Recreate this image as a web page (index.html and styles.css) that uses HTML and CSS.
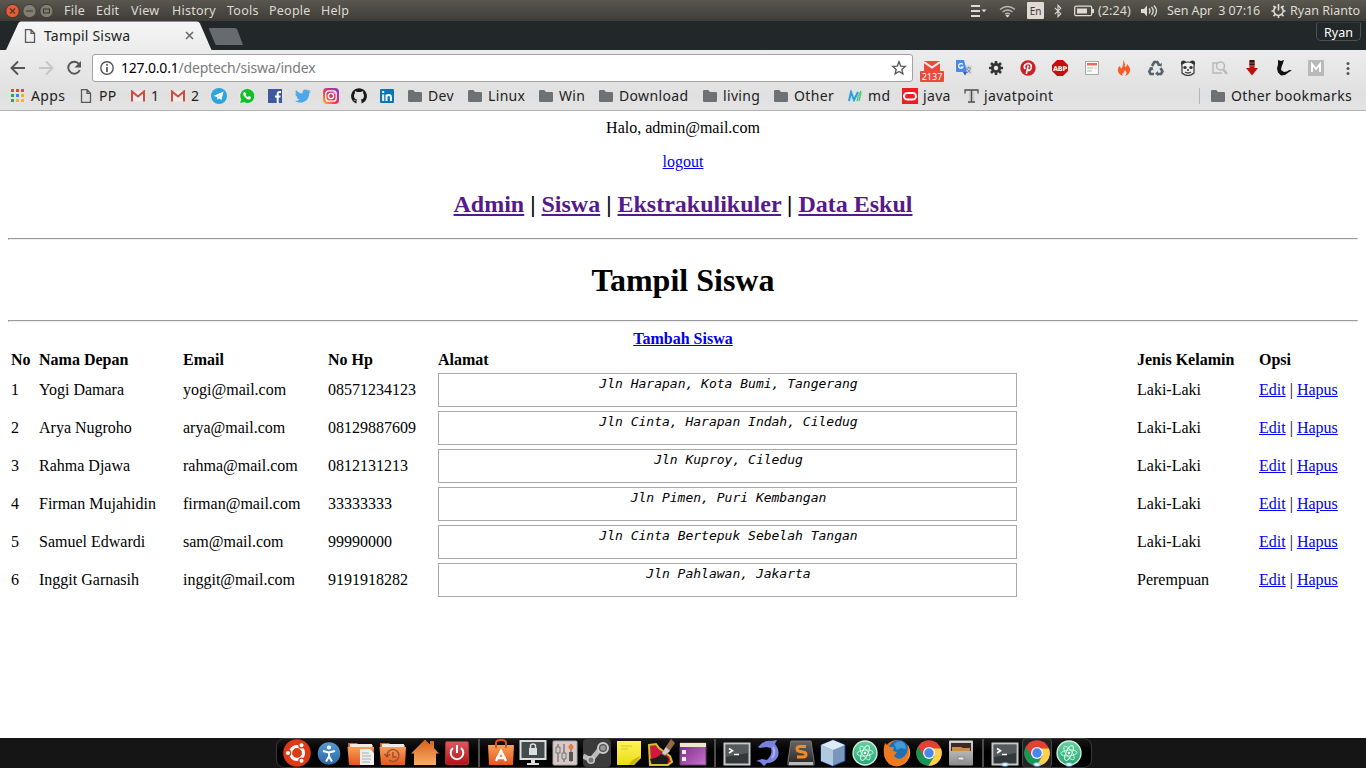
FILE: index.html
```html
<!DOCTYPE html>
<html lang="id">
<head>
<meta charset="utf-8">
<title>Tampil Siswa</title>
<link rel="stylesheet" href="styles.css">
</head>
<body>
<svg class="defs" width="0" height="0">
  <defs>
    <linearGradient id="orange" x1="0" y1="0" x2="0" y2="1"><stop offset="0" stop-color="#f6a05a"/><stop offset="1" stop-color="#e4571e"/></linearGradient>
    <linearGradient id="home" x1="0" y1="0" x2="0" y2="1"><stop offset="0" stop-color="#d4601c"/><stop offset="1" stop-color="#f9ad68"/></linearGradient>
    <linearGradient id="blue" x1="0" y1="0" x2="0" y2="1"><stop offset="0" stop-color="#5b9bd0"/><stop offset="1" stop-color="#2a68a8"/></linearGradient>
    <linearGradient id="red" x1="0" y1="0" x2="0" y2="1"><stop offset="0" stop-color="#dc5a60"/><stop offset="1" stop-color="#b80f18"/></linearGradient>
    <linearGradient id="purple" x1="0" y1="0" x2="1" y2="1"><stop offset="0" stop-color="#7d2482"/><stop offset="1" stop-color="#c873cf"/></linearGradient>
    <linearGradient id="gray" x1="0" y1="0" x2="0" y2="1"><stop offset="0" stop-color="#d6d6d6"/><stop offset="1" stop-color="#8b8b8b"/></linearGradient>
    <linearGradient id="dark" x1="0" y1="0" x2="0" y2="1"><stop offset="0" stop-color="#666"/><stop offset="1" stop-color="#262626"/></linearGradient>
    <linearGradient id="green" x1="0" y1="0" x2="0" y2="1"><stop offset="0" stop-color="#67d2a0"/><stop offset="1" stop-color="#23a873"/></linearGradient>
    <linearGradient id="yellow" x1="0" y1="0" x2="0" y2="1"><stop offset="0" stop-color="#fff35a"/><stop offset="1" stop-color="#ecdc14"/></linearGradient>
    <linearGradient id="insta" x1="0" y1="1" x2="1" y2="0"><stop offset="0" stop-color="#fdc13a"/><stop offset=".45" stop-color="#ee3254"/><stop offset="1" stop-color="#8139ca"/></linearGradient>
    <radialGradient id="glow"><stop offset="0" stop-color="#fff"/><stop offset=".5" stop-color="#b8ddf8"/><stop offset="1" stop-color="#5aa0e0" stop-opacity="0"/></radialGradient>
    <symbol id="folder" viewBox="0 0 14 12"><path d="M0 1.2Q0 0 1.2 0H5.3L7 2h5.8Q14 2 14 3.2v7.6Q14 12 12.8 12H1.2Q0 12 0 10.8z" fill="#6d7174"/></symbol>
    <symbol id="page" viewBox="0 0 12 14"><path d="M1.5.7H7L10.5 4.3V13.3H1.5zM7 .7V4.3h3.5" fill="none" stroke="#5a5a5a" stroke-width="1.3"/></symbol>
    <symbol id="gmail" viewBox="0 0 14 12"><path d="M0 1h14v10.500H0z" fill="#ededed"/><path d="M1 11.500V1.500L7 6.500l6-5v10" fill="none" stroke="#d54b3d" stroke-width="2"/></symbol>
    <symbol id="chrome" viewBox="0 0 28 28"><circle cx="14" cy="14" r="12.700" fill="#e34133"/><path d="M3 7.700A12.700 12.700 0 0 0 13.500 26.700L19.500 16.900 14 14 8.500 17z" fill="#14985a"/><path d="M26 9.500H14l5.500 7.500-6 9.700A12.700 12.700 0 0 0 26 9.500" fill="#fed24a"/><circle cx="14" cy="14" r="6" fill="#f4f4f4"/><circle cx="14" cy="14" r="4.700" fill="#4787ee"/></symbol>
    <symbol id="terminal" viewBox="0 0 28 28"><path d="M1.500 4.500h25v21h-25z" fill="#33383a" stroke="#c8c8c8" stroke-width="2"/><path d="M3 6h22v8L3 18z" fill="#555a5c"/><path d="M6 9.500l3.500 2.300L6 14M11 15.500h5" fill="none" stroke="#fff" stroke-width="1.600"/></symbol>
    <symbol id="atom" viewBox="0 0 28 28"><circle cx="14" cy="14" r="12" fill="url(#green)" stroke="#d9eee4" stroke-width="1.300"/><g fill="none" stroke="#d2f7e6" stroke-width=".9"><ellipse cx="14" cy="14" rx="3" ry="8" transform="rotate(-35 14 14)"/><ellipse cx="14" cy="14" rx="3" ry="8" transform="rotate(25 14 14)"/><ellipse cx="14" cy="14" rx="3" ry="8" transform="rotate(85 14 14)"/></g><circle cx="14" cy="14" r="1.300" fill="#fff"/></symbol>
    <symbol id="gear" viewBox="0 0 16 16"><path d="M8 1v14M1 8h14M3 3l10 10M13 3L3 13" stroke="#333" stroke-width="2.600"/><circle cx="8" cy="8" r="5" fill="#333"/><circle cx="8" cy="8" r="2.200" fill="#e8e8e8"/></symbol>
  </defs>
</svg>

<header class="panel">
  <div class="window-buttons">
    <svg width="50" height="16" viewBox="0 0 50 16"><circle cx="7.500" cy="8" r="6.700" fill="#e75c32" stroke="#44352c"/><circle cx="24.500" cy="8" r="6.700" fill="#817e74" stroke="#393833"/><circle cx="41.500" cy="8" r="6.700" fill="#817e74" stroke="#393833"/><path d="M5 5.500l5 5m0-5l-5 5M21 8h7M38.500 6h6v4h-6z" stroke="#3d3730" stroke-width="1.100" fill="none"/></svg>
  </div>
  <nav class="menu"><span class="m-file">File</span><span class="m-edit">Edit</span><span class="m-view">View</span><span class="m-history">History</span><span class="m-tools">Tools</span><span class="m-people">People</span><span>Help</span></nav>
  <div class="tray">
    <svg class="t-list" width="16" height="14" viewBox="0 0 16 14"><path d="M0 2h9M0 7h9M0 12h9" stroke="#dfdbd2" stroke-width="2.200"/><path d="M10.500 5.500h5L13 8.200z" fill="#dfdbd2"/></svg>
    <svg class="t-wifi" width="17" height="14" viewBox="0 0 17 14"><g fill="none" stroke="#bcb8ae" stroke-width="1.400"><path d="M1 5.500q7.500-6 15 0M3.500 8q5-4 10 0M6 10.300q2.500-2 5 0"/></g><path d="M6.500 11.500L8.500 13.500l2-2q-2-1.400-4 0" fill="#dfdbd2"/></svg>
    <span class="lang">En</span>
    <svg class="t-bt" width="8" height="14" viewBox="0 0 8 14"><path d="M.8 3.800L6.800 9.700 4 12.700V1.300l2.800 3-6 5.900" fill="none" stroke="#dfdbd2" stroke-width="1.100"/></svg>
    <svg class="t-battery" width="21" height="12" viewBox="0 0 21 12"><rect x=".7" y="1.200" width="17" height="9.500" rx="1.500" fill="none" stroke="#dfdbd2" stroke-width="1.300"/><path d="M3 3.500h10v5H3zM18 4h2v4h-2z" fill="#dfdbd2"/></svg>
    <span class="t-left">(2:24)</span>
    <svg class="t-volume" width="17" height="14" viewBox="0 0 17 14"><path d="M0 5h3l3-3.500v11L3 9H0z" fill="#dfdbd2"/><path d="M8 4.500q2 2.500 0 5M10.500 3q3.500 4 0 8M13 1.500q5 5.500 0 11" fill="none" stroke="#dfdbd2" stroke-width="1.300"/></svg>
    <span class="t-date">Sen Apr &nbsp;3 07:16</span>
    <svg class="t-gear" width="15" height="15" viewBox="0 0 16 16"><path d="M5.500 4A5 5 0 1 0 10.500 4M8 1v7" fill="none" stroke="#dfdbd2" stroke-width="1.700"/><path d="M.5 8.500h2.500M13 8.500h2.500M2.500 3l1.700 1.700M13.500 3l-1.700 1.700M2.700 14l2-2M13.300 14l-2-2M8 13v3" stroke="#dfdbd2" stroke-width="1.700"/></svg>
    <span class="t-user">Ryan Rianto</span>
  </div>
</header>

<div class="tabs">
  <svg class="tab-shape" width="250" height="29" viewBox="0 0 250 29"><defs><linearGradient id="tabfill" x1="0" y1="0" x2="0" y2="1"><stop stop-color="#f5f5f5"/><stop offset="1" stop-color="#ececec"/></linearGradient></defs><path d="M6 29L18.500 2Q19.300.5 21 .5H197Q199 .5 200 2.500L211.500 29z" fill="url(#tabfill)"/><path d="M209.500 7H235q1.500 0 2.200 1.500L243 24H217q-1.300 0-2-1.500L209 8z" fill="#676b6f"/></svg>
  <div class="tab-label"><svg width="12" height="14"><use href="#page"/></svg><span>Tampil Siswa</span><svg class="close" width="9" height="9" viewBox="0 0 9 9"><path d="M1 1l7 7M8 1L1 8" stroke="#666" stroke-width="1.500"/></svg></div>
  <div class="profile">Ryan</div>
</div>

<div class="chrome">
  <div class="toolbar">
    <svg class="nav-icons" width="92" height="36" viewBox="0 0 92 36"><g fill="none" stroke-width="1.900"><path d="M25 18H12M18 11.500L11.500 18l6.500 6.500" stroke="#555"/><path d="M39 18h13M46 11.500l6.500 6.500-6.500 6.500" stroke="#c6c6c6"/><path d="M79 14A6 6 0 1 0 79.800 20" stroke="#555"/></g><path d="M81 11v6.500h-6.500z" fill="#555"/></svg>
    <div class="url">
      <svg width="14" height="14" viewBox="0 0 14 14"><circle cx="7" cy="7" r="6.200" fill="none" stroke="#555" stroke-width="1.400"/><path d="M7 3v1.800M7 6v5" stroke="#555" stroke-width="1.700"/></svg>
      <span class="address"><b>127.0.0.1</b>/deptech/siswa/index</span>
      <svg width="16" height="16" viewBox="0 0 16 16"><path d="M8 1.800l1.700 4.300 4.600.3-3.500 3 1.100 4.500L8 11.400l-3.900 2.500 1.100-4.500-3.500-3 4.600-.3z" fill="none" stroke="#555" stroke-width="1.300"/></svg>
    </div>
    <div class="extensions">
      <div class="mailbadge"><svg width="16" height="10" viewBox="0 0 16 10"><path d="M0 0h16v10H0z" fill="#e84b3c"/><path d="M0 1l8 5.500L16 1" fill="none" stroke="#eee" stroke-width="2"/></svg><span>2137</span></div>
      <svg width="16" height="16" viewBox="0 0 16 16"><path d="M6 5h10v10H8z" fill="#dcdcdc"/><path d="M0 0h8l3 12H1q-1 0-1-1z" fill="#4789ee"/><path d="M7 12h4l-2 3.500z" fill="#3059bd"/><path d="M6.800 4.500A2.300 2.300 0 1 0 7 7H4.800" stroke="#fff" stroke-width="1.200" fill="none"/><path d="M10 8h5M12.500 6.800V8M11 9l3.500 4M14.500 9L11 13" stroke="#75808c" stroke-width=".9"/></svg>
      <svg width="16" height="16"><use href="#gear"/></svg>
      <svg width="16" height="16" viewBox="0 0 16 16"><circle cx="8" cy="8" r="7.700" fill="#cb2027"/><path d="M5.300 9q-2-2-.2-4.200Q8.500 2 11 5q1 3-1 5-1.500 1-2.300-.5M8.200 5.500L6.300 14" fill="none" stroke="#fff" stroke-width="1.600"/></svg>
      <svg width="16" height="16" viewBox="0 0 16 16"><path d="M5 0h6l5 5v6l-5 5H5l-5-5V5z" fill="#c70d0e"/><text x="8" y="10.700" class="abp">ABP</text></svg>
      <svg width="16" height="16" viewBox="0 0 16 16"><path d="M1.500 1.500h13v13h-13z" fill="#fafafa" stroke="#a5a9ad"/><path d="M3 3h10v2.500H3z" fill="#ee6a5b"/><path d="M3 8h6M3 11h5" stroke="#a6c98c"/><path d="M10 8h3" stroke="#ccc"/></svg>
      <svg width="16" height="16" viewBox="0 0 16 16"><path d="M7 0q3 4 1.500 7Q11 7 11 4q4 4 3 7-1 4-5 5 3-3 0-6-1 3-3 4l1 2Q1 14 2 9q0-2 2-3l1 3Q8 6 7 0" fill="#fa5b25"/></svg>
      <svg width="16" height="16" viewBox="0 0 16 16"><g fill="none" stroke="#56616b" stroke-width="2.600"><path d="M4 6l2.300-4h3l2 3.500"/><path d="M12.500 8l2 3.500L13 14H9"/><path d="M6 14H2.500L1.300 11.500 3.300 8"/></g><path d="M9 5.500l4.500 1L14 3zM10 11v5l-3-2.500zM1 7.500L4.500 7l1 3.500z" fill="#56616b"/></svg>
      <svg width="16" height="16" viewBox="0 0 16 16"><circle cx="3.500" cy="3" r="2.600" fill="#333"/><circle cx="12.500" cy="3" r="2.600" fill="#333"/><path d="M2 4q6-4 12 0v9q-6 5-12 0z" fill="#f0f0f0" stroke="#333" stroke-width="1.200"/><ellipse cx="5" cy="7.500" rx="1.700" ry="1.500" fill="#333"/><ellipse cx="11" cy="7.500" rx="1.700" ry="1.500" fill="#333"/><path d="M5 12q3 2 6 0M7 10h2" stroke="#333" fill="none" stroke-width="1.400"/></svg>
      <svg width="16" height="16" viewBox="0 0 16 16"><g fill="none" stroke="#b9b9b9" stroke-width="1.500"><path d="M5 3H1v10h9M1 3h5"/><circle cx="8.500" cy="6" r="4"/></g><path d="M11 9l4 5" stroke="#b9b9b9" stroke-width="2.500"/></svg>
      <svg width="16" height="16" viewBox="0 0 16 16"><path d="M5.500 1h5v7H14l-6 7.500L2 8h3.500z" fill="#c60b0b"/><path d="M5.500 0h5v5h-5z" fill="#311"/><path d="M5 3h6M5 6h6" stroke="#a66"/></svg>
      <svg width="16" height="16" viewBox="0 0 16 16"><path d="M2 0l3 1 3-1-1 3-1.500 4-.5 3 3 2 3-.5L13 10l3 .5-3 1.500-4 3-4 .5-3-3-1-4 1-4z" fill="#111"/></svg>
      <svg width="16" height="16" viewBox="0 0 16 16"><rect width="16" height="16" rx="1" fill="#b9b9b9"/><path d="M4 12V4l4 5 4-5v8" fill="none" stroke="#fff" stroke-width="1.800"/></svg>
      <svg width="16" height="16" viewBox="0 0 16 16"><g fill="#555"><circle cx="8" cy="3.500" r="1.500"/><circle cx="8" cy="8.500" r="1.500"/><circle cx="8" cy="13.500" r="1.500"/></g></svg>
    </div>
  </div>
  <div class="bookmarks">
    <span class="b-apps"><svg width="14" height="14" viewBox="0 0 14 14"><path d="M0 0h3v3H0zM5 0h3v3H5zM10 0h3v3h-3z" fill="#ef4437"/><path d="M0 5h3v3H0zM0 10h3v3H0z" fill="#35a35a"/><path d="M5 5h3v3H5z" fill="#3b88e9"/><path d="M10 5h3v3h-3zM5 10h3v3H5zM10 10h3v3h-3z" fill="#fab315"/></svg>Apps</span>
    <span class="b-pp"><svg width="12" height="14"><use href="#page"/></svg>PP</span>
    <span class="b-mail"><svg width="14" height="12"><use href="#gmail"/></svg>1</span>
    <span class="b-mail2"><svg width="14" height="12"><use href="#gmail"/></svg>2</span>
    <span class="b-icon"><svg width="16" height="16" viewBox="0 0 16 16"><circle cx="8" cy="8" r="8" fill="#2da5dc"/><path d="M2.500 8l10-4.500L10.500 12 8 10.300 6.500 12 6 9z" fill="#fff"/><path d="M6 9l4.500-3.500L7 10" fill="#b9dced"/></svg></span>
    <span class="b-icon"><svg width="16" height="16" viewBox="0 0 16 16"><path d="M.5 15.500l1.300-4A7.400 7.400 0 1 1 5 14.600z" fill="#13bd2b" stroke="#fff" stroke-width=".6"/><path d="M5 4Q3 6 6 9.200T11.500 11l.5-2-2-1-1 1Q7 8.500 6.500 7l.7-1L6 4z" fill="#fff"/></svg></span>
    <span class="b-icon"><svg width="16" height="16" viewBox="0 0 16 16"><path d="M1 1h14v14H1z" fill="#3d599b"/><path d="M14 4h-1.500Q10.700 4 10.700 6V15M8 8.500h5.500" stroke="#fff" stroke-width="2" fill="none"/></svg></span>
    <span class="b-icon"><svg width="16" height="16" viewBox="0 0 16 16"><path d="M1 2q3 3.500 6.500 3.500Q7 2 10.500 1.500 12 1.500 13 2.500L15 2l-1 1.800 2-.3-1.700 1.800Q14 12 8.500 14 4 15.500 0 13q3 0 4.500-1.500Q2 11 1.700 9h1.200Q0 8 .5 5.500l1.200.4Q-.3 4 1 2" fill="#4da7e8"/></svg></span>
    <span class="b-icon"><svg width="16" height="16" viewBox="0 0 16 16"><rect width="16" height="16" rx="4" fill="url(#insta)"/><rect x="2.800" y="2.800" width="10.400" height="10.400" rx="3" fill="none" stroke="#fff" stroke-width="1.300"/><circle cx="8" cy="8" r="2.600" fill="none" stroke="#fff" stroke-width="1.300"/><circle cx="11" cy="5" r=".8" fill="#fff"/></svg></span>
    <span class="b-icon"><svg width="16" height="16" viewBox="0 0 16 16"><path d="M8 .2A7.900 7.900 0 0 0 5.500 15.600V13Q3.500 13.500 2.600 11.500l1.200.5q1 1.200 2 .6l.4-1Q3 11 3 7.700 3 6.300 4 5.300 3.700 4 4 3l2.200 1h3.600L12 3q.4 1.200 0 2.300 1 1 1 2.400 0 3.300-3.300 3.900.8.800.8 1.700v2.300A7.900 7.900 0 0 0 8 .2" fill="#191717"/></svg></span>
    <span class="b-icon"><svg width="16" height="16" viewBox="0 0 16 16"><rect x="1" y="1" width="14" height="14" rx="1" fill="#0976b4"/><path d="M4.200 6.500V13M4.200 3v2M7.500 13V6.500M7.500 9q0-2 2.200-2t2.200 2v4" stroke="#fff" stroke-width="2" fill="none"/></svg></span>
    <span class="b-dev"><svg width="14" height="12"><use href="#folder"/></svg>Dev</span>
    <span class="b-linux"><svg width="14" height="12"><use href="#folder"/></svg>Linux</span>
    <span class="b-win"><svg width="14" height="12"><use href="#folder"/></svg>Win</span>
    <span class="b-download"><svg width="14" height="12"><use href="#folder"/></svg>Download</span>
    <span class="b-living"><svg width="14" height="12"><use href="#folder"/></svg>living</span>
    <span class="b-other"><svg width="14" height="12"><use href="#folder"/></svg>Other</span>
    <span class="b-md"><svg width="14" height="12" viewBox="0 0 14 12"><path d="M1 11L3 2l3 8 4-8" fill="none" stroke="#2c9de0" stroke-width="2"/><path d="M13 1l-2 4M10.500 5L9 11M13 2l-2 9" stroke="#4ecb75" stroke-width="1.400"/></svg>md</span>
    <span class="b-java"><svg width="16" height="16" viewBox="0 0 16 16"><path d="M0 0h16v16H0z" fill="#ee1c25"/><rect x="2" y="5" width="12" height="6.500" rx="3.200" fill="none" stroke="#fff" stroke-width="2"/></svg>java</span>
    <span class="b-point"><svg width="15" height="14" viewBox="0 0 15 14"><path d="M1 4.500V1h13v3.500M7.500 1v12M4 13h7" fill="none" stroke="#4b4b4b" stroke-width="1.300"/><path d="M6 2.500v10M9 2.500v10" stroke="#9a9a9a" stroke-width=".7"/></svg>javatpoint</span>
    <span class="b-rest"><svg width="14" height="12"><use href="#folder"/></svg>Other bookmarks</span>
  </div>
</div>

<main class="content">
  Halo, admin@mail.com
  <p><a href="#logout">logout</a></p>
  <h2><a class="visited" href="#admin">Admin</a> | <a class="visited" href="#siswa">Siswa</a> | <a class="visited" href="#ekskul">Ekstrakulikuler</a> | <a class="visited" href="#data">Data Eskul</a></h2>
  <hr>
  <h1>Tampil Siswa</h1>
  <hr>
  <b><a href="#tambah">Tambah Siswa</a></b>
  <table>
    <colgroup><col class="c-no"><col class="c-name"><col class="c-email"><col class="c-phone"><col class="c-address"><col class="c-sex"><col class="c-opsi"></colgroup>
    <tr><th>No</th><th>Nama Depan</th><th>Email</th><th>No Hp</th><th>Alamat</th><th>Jenis Kelamin</th><th>Opsi</th></tr>
    <tr><td>1</td><td>Yogi Damara</td><td>yogi@mail.com</td><td>08571234123</td><td><div class="area">Jln Harapan, Kota Bumi, Tangerang</div></td><td>Laki-Laki</td><td><a href="#e">Edit</a> | <a href="#h">Hapus</a></td></tr>
    <tr><td>2</td><td>Arya Nugroho</td><td>arya@mail.com</td><td>08129887609</td><td><div class="area">Jln Cinta, Harapan Indah, Ciledug</div></td><td>Laki-Laki</td><td><a href="#e">Edit</a> | <a href="#h">Hapus</a></td></tr>
    <tr><td>3</td><td>Rahma Djawa</td><td>rahma@mail.com</td><td>0812131213</td><td><div class="area">Jln Kuproy, Ciledug</div></td><td>Laki-Laki</td><td><a href="#e">Edit</a> | <a href="#h">Hapus</a></td></tr>
    <tr><td>4</td><td>Firman Mujahidin</td><td>firman@mail.com</td><td>33333333</td><td><div class="area">Jln Pimen, Puri Kembangan</div></td><td>Laki-Laki</td><td><a href="#e">Edit</a> | <a href="#h">Hapus</a></td></tr>
    <tr><td>5</td><td>Samuel Edwardi</td><td>sam@mail.com</td><td>99990000</td><td><div class="area">Jln Cinta Bertepuk Sebelah Tangan</div></td><td>Laki-Laki</td><td><a href="#e">Edit</a> | <a href="#h">Hapus</a></td></tr>
    <tr><td>6</td><td>Inggit Garnasih</td><td>inggit@mail.com</td><td>9191918282</td><td><div class="area">Jln Pahlawan, Jakarta</div></td><td>Perempuan</td><td><a href="#e">Edit</a> | <a href="#h">Hapus</a></td></tr>
  </table>
</main>

<footer class="dock">
  <div class="shelf">
    <svg viewBox="0 0 28 28"><circle cx="14" cy="14" r="13.800" fill="#dd3a17"/><circle cx="14" cy="14" r="6.500" fill="none" stroke="#fff" stroke-width="3.200"/><g stroke="#dd3a17" stroke-width="1.300" fill="#fff"><circle cx="5" cy="14" r="2.700"/><circle cx="18.500" cy="6.200" r="2.700"/><circle cx="18.500" cy="21.800" r="2.700"/></g></svg>
    <svg viewBox="0 0 28 28"><circle cx="14" cy="14.500" r="11.300" fill="url(#blue)"/><circle cx="14" cy="8.500" r="2.100" fill="#fff"/><path d="M8 12l6 1.500 6-1.500M14 12.500v5l-3 5M14 17.500l3 5" stroke="#fff" stroke-width="2" fill="none"/></svg>
    <svg viewBox="0 0 28 28"><path d="M1 4h9l2 2h14v5H1z" fill="#c96a38"/><path d="M3 5h22v6H3z" fill="#f5eadf"/><path d="M.5 8H27l-1 18H2z" fill="url(#orange)"/><path d="M13 10h10l4 4v12H13z" fill="#eee"/><path d="M15 14h7M15 17h9M15 20h9M15 23h8" stroke="#aaa"/></svg>
    <svg viewBox="0 0 28 28"><path d="M1 4h9l2 2h14v5H1z" fill="#c96a38"/><path d="M3 5h22v6H3z" fill="#f5eadf"/><path d="M.5 8H27l-1 18H2z" fill="url(#orange)"/><path d="M8 17a6 6 0 1 1 2 4M5.500 15l2.500 3 3-3M14 13v5h3.500" stroke="#9b512d" stroke-width="1.500" fill="none"/></svg>
    <svg viewBox="0 0 28 28"><path d="M14 .5l5 5V2h4v7l5 5.500h-3V26H3V14.500H0z" fill="url(#home)"/></svg>
    <svg viewBox="0 0 28 28"><rect x="2.500" y="2.500" width="23" height="23" rx="1.500" fill="url(#red)" stroke="#a32d32"/><path d="M10 9a6.300 6.300 0 1 0 8 0M14 6v8" fill="none" stroke="#fff" stroke-width="2"/></svg>
    <i class="divider"></i>
    <svg viewBox="0 0 28 28"><path d="M1 6h26l-1 20H2z" fill="url(#orange)"/><path d="M9 9V4q0-3 5-3t5 3v5" fill="none" stroke="#e84d1c" stroke-width="2"/><path d="M9 22l5-10 5 10M9 19h10" fill="none" stroke="#fff" stroke-width="2.500"/></svg>
    <svg viewBox="0 0 28 28"><path d="M1.500 2h25v18h-25z" fill="#424b4d" stroke="#ddd" stroke-width="2"/><path d="M12 20h4v4h4v2H8v-2h4z" fill="#ddd"/><path d="M10 9h8v7h-8z" fill="#ddd"/><path d="M11.500 9V7q0-2 2.500-2t2.500 2v2" stroke="#ddd" stroke-width="1.500" fill="none"/></svg>
    <svg viewBox="0 0 28 28"><rect x="2" y="2" width="24" height="24" rx="1" fill="#d8c8c8" stroke="#aaa"/><path d="M7 5v18M13 5v18M20 5v18" stroke="#9a8e8e" stroke-width="2"/><path d="M5 8h4v6H5zM11 14h4v6h-4z" fill="#ccc" stroke="#777"/><path d="M18 13h4v9h-4z" fill="#555"/><circle cx="20" cy="8" r="2.500" fill="#f17b34"/></svg>
    <svg viewBox="0 0 28 28"><rect width="28" height="28" rx="4" fill="#3c3b3b"/><path d="M0 17l8 4 9-11" stroke="#bbb" stroke-width="5" fill="none"/><circle cx="20" cy="9" r="5" fill="#555" stroke="#ccc" stroke-width="2"/><circle cx="20" cy="9" r="2.800" fill="#999"/><circle cx="8" cy="21" r="3.300" fill="#777" stroke="#ccc" stroke-width="1.500"/></svg>
    <svg viewBox="0 0 28 28"><path d="M2 2h24v17l-7 7H2z" fill="url(#yellow)"/><path d="M14 26q1-5 12-9l-7 9z" fill="#c8b811"/><path d="M6 7h11M6 10h7" stroke="#d4c735"/></svg>
    <svg viewBox="0 0 28 28"><path d="M2 6l7-1 3 4 11 8 2 6-4 3H3z" fill="#cf193d" stroke="#cdc439" stroke-width="2"/><path d="M3 20q9-1 12-7l7 7-2 5H5z" fill="#1d1d1b"/><path d="M14 15l4-6 6-9 4 4-6 9-4 4z" fill="#966948"/><path d="M15 14l4-6 4 4-5 4z" fill="#ccc"/></svg>
    <svg viewBox="0 0 28 28"><path d="M1 4h26v22H1z" fill="url(#purple)" stroke="#684069"/><path d="M1 4h26v4H1z" fill="#ece6ce"/><path d="M3 11h4v4H3zM3 18h4v4H3z" fill="#eee"/></svg>
    <i class="divider"></i>
    <svg viewBox="0 0 28 28"><use href="#terminal"/></svg>
    <svg viewBox="0 0 28 28"><path d="M6 5q5-4 10-3l6-1-2 4q6 8 2 14-3 5-10 5l-3 3-4-4-4-1 6-2 5 1q6-6 4-12l-5-1-6 1-2-1z" fill="#7a82df"/><path d="M18 8q3 6-1 11" stroke="#a9afff" stroke-width="2" fill="none"/></svg>
    <svg viewBox="0 0 28 28"><path d="M4 2h20l3 20v4H1v-4z" fill="url(#dark)" stroke="#777"/><path d="M2 23h24v3H2z" fill="#bbb"/><path d="M19 7.500h-6q-3 0-3 2.500 0 2 3 2.500l3 .5q3 .5 3 2.500 0 2.500-3 2.500h-6" stroke="#f58a22" stroke-width="3" fill="none"/></svg>
    <svg viewBox="0 0 28 28"><path d="M14 1l12 5v16l-12 5-12-5V6z" fill="#7897ba" stroke="#1d3d91"/><path d="M2 6l12 5 12-5-12-5z" fill="#dcebf6"/><path d="M2 6l12 5v16L2 22z" fill="#b0c9de"/></svg>
    <svg viewBox="0 0 28 28"><use href="#atom"/></svg>
    <svg viewBox="0 0 28 28"><circle cx="14" cy="14" r="13" fill="#e8701f"/><circle cx="15.500" cy="11" r="10" fill="#1c70b9"/><path d="M11 5q4-4 9-2 3 3 3 7l-5-1-4 2z" fill="#429bd4"/><path d="M2 4l4 4 5 0-1 4 4 1-3 4q3 4 8 2 6-3 6-13 5 9-1 16-8 9-18 3Q-2 16 2 4" fill="#ee7a20"/><path d="M25 6q5 13-5 18 7-3 6-14" fill="#ffd34d"/></svg>
    <svg viewBox="0 0 28 28"><use href="#chrome"/></svg>
    <svg viewBox="0 0 28 28"><rect x="2" y="1.500" width="24" height="25" rx="1" fill="url(#gray)"/><path d="M4 4h20v8H4z" fill="#3d2a20"/><path d="M5 8h9l2 1h7v3H5z" fill="#d28b47"/><path d="M11 18h6v3h-6z" fill="#eee" stroke="#888"/></svg>
    <i class="divider"></i>
    <svg viewBox="0 0 28 28"><use href="#terminal"/><ellipse cx="14" cy="25.500" rx="5" ry="2.800" fill="url(#glow)"/></svg>
    <svg class="active" viewBox="0 0 28 28"><use href="#chrome"/><ellipse cx="14" cy="25.500" rx="5" ry="2.800" fill="url(#glow)"/></svg>
    <svg viewBox="0 0 28 28"><use href="#atom"/><ellipse cx="14" cy="25.500" rx="5" ry="2.800" fill="url(#glow)"/></svg>
  </div>
</footer>
</body>
</html>
```
FILE: styles.css
```css
* { box-sizing: border-box; }
body { margin: 0; width: 1366px; height: 768px; overflow: hidden; display: flex; flex-direction: column; background: #fff; font-family: "Liberation Serif", serif; }
.defs { position: absolute; }
svg { display: block; flex: none; }

.panel, .tabs, .chrome { font-family: "Noto Sans", sans-serif; white-space: nowrap; flex: none; }
.panel { height: 21px; display: flex; align-items: center; color: #dfdbd2; font-size: 12.5px; line-height: 20px; background: linear-gradient(#59574e, #3d3c37); }
.window-buttons { width: 59px; padding-left: 5px; margin-right: 5px; }
.menu { display: flex; flex: 1; letter-spacing: .25px; }
.m-file { width: 32px; }
.m-edit { width: 35px; }
.m-view { width: 41px; }
.m-history { width: 55px; }
.m-tools { width: 42px; }
.m-people { width: 52px; }
.tray { width: 395px; display: flex; align-items: center; }
.t-list { margin-right: 12px; }
.t-wifi { margin-right: 11px; }
.lang { width: 17px; height: 17px; border-radius: 1px; background: #dfdbd2; color: #3c3b37; font-size: 10px; line-height: 18px; text-align: center; margin-right: 10px; }
.t-bt { margin-right: 12px; }
.t-battery { margin-right: 3px; }
.t-left { width: 43px; letter-spacing: .1px; }
.t-volume { margin-right: 9px; }
.t-date { width: 104px; letter-spacing: -.1px; }
.t-gear { margin-right: 4px; }
.t-user { letter-spacing: 0; }

.tabs { height: 29px; position: relative; background: #22272a; display: flex; justify-content: space-between; align-items: flex-start; }
.tab-shape { position: absolute; left: 0; top: 0; }
.tab-label { position: relative; display: flex; align-items: center; height: 29px; width: 194px; padding-left: 24px; font-size: 14px; letter-spacing: .2px; color: #222; }
.tab-label span { flex: 1; padding-left: 8px; }
.profile { width: 45px; height: 19px; margin: 1px 5px 0 0; border: 1px solid #4c5154; border-top-color: #30363a; border-radius: 2px 2px 5px 5px; color: #fff; font-size: 12.5px; line-height: 20px; text-align: center; }

.chrome { height: 61px; border-bottom: 1px solid #b1b1b1; background: linear-gradient(#ececec, #e0e0e0 75%, #e4e4e4); }
.toolbar { height: 36px; display: flex; align-items: center; }
.url { width: 821px; height: 28px; border: 1px solid #a2a2a2; border-radius: 3px; background: #fff; display: flex; align-items: center; padding: 0 5px 0 7px; }
.address { flex: 1; padding-left: 7px; color: #7b7b7b; font-size: 14px; line-height: 18px; letter-spacing: -.2px; margin-top: -1px; }
.address b { color: #000; font-weight: 400; }
.extensions { margin-left: 3px; display: grid; grid-template-columns: repeat(14, 32px); justify-items: center; align-items: center; }
.mailbadge { display: flex; flex-direction: column; align-items: center; height: 20px; margin-top: 5px; }
.mailbadge span { width: 24px; height: 11px; border-radius: 1px; background: #e84b3c; color: #fff; font-size: 9px; line-height: 11px; text-align: center; flex: none; }
.abp { font: bold 6.5px "DejaVu Sans", sans-serif; fill: #fff; text-anchor: middle; letter-spacing: -.2px; }

.bookmarks { height: 20px; padding-left: 11px; display: flex; align-items: center; font-size: 14px; letter-spacing: .34px; line-height: 20px; color: #222; }
.bookmarks span { display: flex; align-items: center; gap: 6px; flex: none; }
.bookmarks .b-pp { gap: 7px; }
.bookmarks .b-java { gap: 5px; }
.bookmarks .b-point { gap: 5px; }
.b-apps { width: 69px; }
.b-pp { width: 51px; }
.b-mail { width: 40px; }
.b-mail2 { width: 40px; }
.b-icon { width: 28px; }
.bookmarks .b-dev { width: 60px; margin-left: 1px; }
.b-linux { width: 71px; }
.b-win { width: 60px; }
.b-download { width: 104px; }
.b-living { width: 71px; }
.b-other { width: 74px; }
.b-md { width: 54px; }
.b-java { width: 62px; }
.b-point { width: 235px; }
.b-rest { border-left: 1px solid #b5b5b5; height: 16px; padding-left: 11px; }

.content { flex: 1; min-height: 0; padding: 8px; text-align: center; font-size: 16px; }
.content p { margin: 16px 0; }
.content h1 { font-size: 32px; margin: 22px 0 20.88px; }
.content h2 { font-size: 24px; margin: 19.92px 0; }
.content hr { margin: 8px 0; height: 2px; border: 1px solid; border-color: #9a9a9a #eee #eee #9a9a9a; }
.content a { color: #0000ee; }
.content a.visited { color: #551a8b; }
table { width: 1350px; table-layout: fixed; border-spacing: 2px; text-align: left; }
th { text-align: left; }
td, th { padding: 1px; white-space: nowrap; }
.c-no { width: 26px; }
.c-name { width: 142px; }
.c-email { width: 143px; }
.c-phone { width: 108px; }
.c-address { width: 697px; }
.c-sex { width: 120px; }
.c-opsi { width: 98px; }
.area { width: 579px; height: 34px; border: 1px solid #a9a9a9; padding: 2px 2px 2px 4px; text-align: center; font: italic 13px/15px "DejaVu Sans Mono", monospace; }

.dock { height: 30px; flex: none; display: flex; justify-content: center; padding-left: 2px; background: #151515; }
.shelf { width: 816px; height: 30px; display: flex; align-items: center; padding: 0 4px; border: 1px solid #383838; border-radius: 8px; background: linear-gradient(#171717, #000 45%, #050505); }
.shelf svg { width: 28px; height: 28px; margin: 0 2px; }
.shelf .active { background: #222; outline: 1px solid #484848; border-radius: 3px; }
.divider { width: 2px; height: 28px; margin: 0 5px; background: #4c4c4c; flex: none; }
```
